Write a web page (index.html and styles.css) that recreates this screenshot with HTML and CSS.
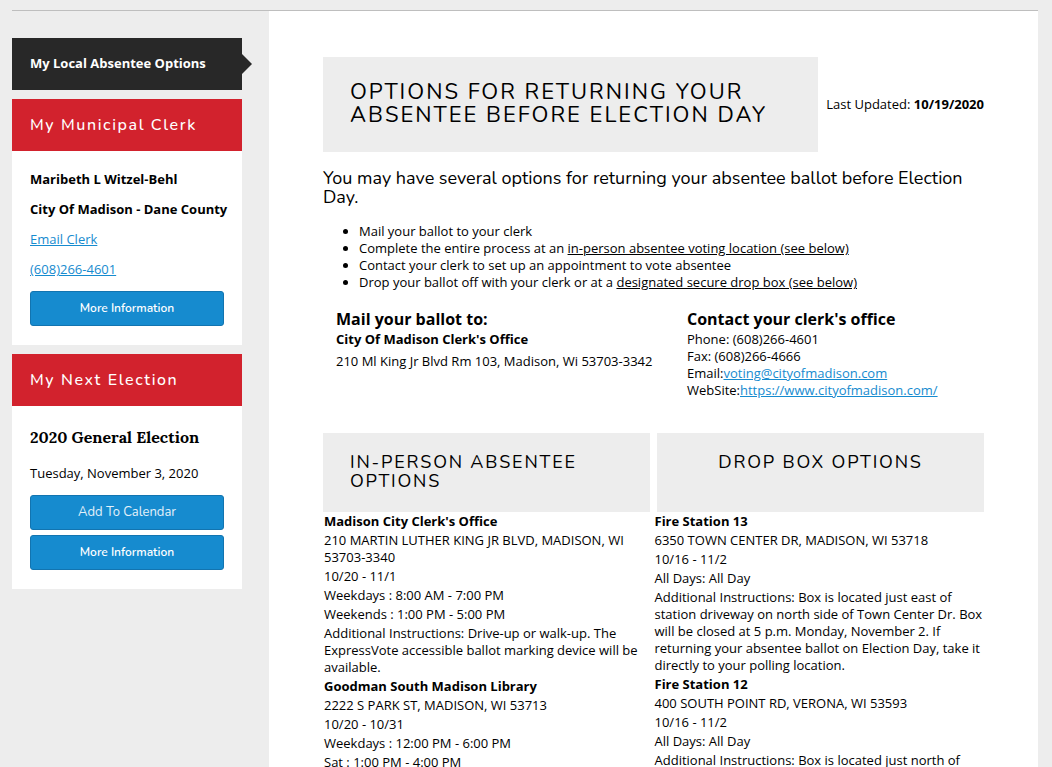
FILE: index.html
```html
<!DOCTYPE html>
<html lang="en">
<head>
<meta charset="utf-8">
<meta name="viewport" content="width=device-width, initial-scale=1">
<title>My Local Absentee Options</title>
<link rel="stylesheet" href="styles.css">
</head>
<body>
<div class="page">
  <aside class="sidebar">
    <nav class="current">My Local Absentee Options</nav>
    <section class="card">
      <h2 class="card-title">My Municipal Clerk</h2>
      <div class="card-body">
        <p><strong>Maribeth L Witzel-Behl</strong></p>
        <p><strong>City Of Madison - Dane County</strong></p>
        <p><a href="#">Email Clerk</a></p>
        <p><a href="#">(608)266-4601</a></p>
        <button class="btn" type="button">More Information</button>
      </div>
    </section>
    <section class="card">
      <h2 class="card-title">My Next Election</h2>
      <div class="card-body">
        <h3 class="election">2020 General Election</h3>
        <p>Tuesday, November 3, 2020</p>
        <button class="btn btn-light" type="button">Add To Calendar</button>
        <button class="btn" type="button">More Information</button>
      </div>
    </section>
  </aside>
  <main class="main">
    <header class="top">
      <h1 class="banner">Options for returning your absentee before election day</h1>
      <p class="updated">Last Updated: <strong>10/19/2020</strong></p>
    </header>
    <h2 class="lead">You may have several options for returning your absentee ballot before Election Day.</h2>
    <ul class="options">
      <li>Mail your ballot to your clerk</li>
      <li>Complete the entire process at an <a href="#in-person">in-person absentee voting location (see below)</a></li>
      <li>Contact your clerk to set up an appointment to vote absentee</li>
      <li>Drop your ballot off with your clerk or at a <a href="#drop-box">designated secure drop box (see below)</a></li>
    </ul>
    <div class="contact">
      <section>
        <h3>Mail your ballot to:</h3>
        <p class="office"><strong>City Of Madison Clerk's Office</strong></p>
        <p>210 Ml King Jr Blvd Rm 103, Madison, Wi 53703-3342</p>
      </section>
      <section>
        <h3>Contact your clerk's office</h3>
        <p>Phone: (608)266-4601</p>
        <p>Fax: (608)266-4666</p>
        <p>Email:<a href="#">voting@cityofmadison.com</a></p>
        <p>WebSite:<a href="#">https://www.cityofmadison.com/</a></p>
      </section>
    </div>
    <div class="heads">
      <h2 class="head" id="in-person">In-person absentee options</h2>
      <h2 class="head head-center" id="drop-box">Drop box options</h2>
    </div>
    <div class="places">
      <section class="places-col">
        <p><strong>Madison City Clerk's Office</strong></p>
        <p>210 MARTIN LUTHER KING JR BLVD, MADISON, WI 53703-3340</p>
        <p>10/20 - 11/1</p>
        <p>Weekdays : 8:00 AM - 7:00 PM</p>
        <p>Weekends : 1:00 PM - 5:00 PM</p>
        <p>Additional Instructions: Drive-up or walk-up. The ExpressVote accessible ballot marking device will be available.</p>
        <p><strong>Goodman South Madison Library</strong></p>
        <p>2222 S PARK ST, MADISON, WI 53713</p>
        <p>10/20 - 10/31</p>
        <p>Weekdays : 12:00 PM - 6:00 PM</p>
        <p>Sat : 1:00 PM - 4:00 PM</p>
      </section>
      <section class="places-col">
        <p><strong>Fire Station 13</strong></p>
        <p>6350 TOWN CENTER DR, MADISON, WI 53718</p>
        <p>10/16 - 11/2</p>
        <p>All Days: All Day</p>
        <p>Additional Instructions: Box is located just east of station driveway on north side of Town Center Dr. Box will be closed at 5 p.m. Monday, November 2. If returning your absentee ballot on Election Day, take it directly to your polling location.</p>
        <p><strong>Fire Station 12</strong></p>
        <p>400 SOUTH POINT RD, VERONA, WI 53593</p>
        <p>10/16 - 11/2</p>
        <p>All Days: All Day</p>
        <p>Additional Instructions: Box is located just north of</p>
      </section>
    </div>
  </main>
</div>
</body>
</html>
```
FILE: styles.css
```css
* { box-sizing: border-box; }

body {
  margin: 0;
  padding: 10px 14px 0 12px;
  background: #ededed;
  color: #000;
  font: 13px/17px "Open Sans", "Noto Sans", sans-serif;
}

h1, h2, h3, p, ul { margin: 0; }
a { color: #168bcf; }

.page {
  display: flex;
  gap: 27px;
  border-top: 1px solid #bebebe;
}

/* Sidebar */
.sidebar {
  flex: 0 0 230px;
  min-width: 0;
  display: flex;
  flex-direction: column;
  gap: 9px;
  padding-top: 27px;
}

.current {
  position: relative;
  padding: 17px 18px 18px;
  background: #282828;
  color: #fff;
  font-weight: 700;
}
.current::after {
  content: "";
  position: absolute;
  left: 100%;
  top: 16px;
  border: 10px solid transparent;
  border-left-color: #282828;
  border-right-width: 0;
}

.card { background: #fff; }
.card-title {
  padding: 16px 18px;
  background: #d2222d;
  color: #fff;
  font: 500 16px/20px Nunito, Lato, sans-serif;
  letter-spacing: 0.1em;
}
.card-body { padding: 20px 18px 19px; }
.card-body p {
  margin-bottom: 13px;
  white-space: nowrap;
}
.election {
  margin-bottom: 16px;
  font: 700 16px/23px Lora, "Liberation Serif", serif;
}

.btn {
  display: block;
  width: 100%;
  height: 35px;
  border: 1px solid #1274b0;
  border-radius: 3px;
  background: #168bcf;
  color: #fff;
  font: 600 12px/17px Nunito, Lato, sans-serif;
}
.btn + .btn { margin-top: 5px; }
.btn-light {
  color: #e3f1fa;
  font-size: 13px;
  font-weight: 400;
}

/* Main column */
.main {
  flex: 1;
  min-width: 0;
  padding: 46px 54px 0;
  background: #fff;
}

.top {
  display: flex;
  align-items: center;
  gap: 8px;
}
.banner {
  flex: 1;
  padding: 24px 27px 25px;
  background: #ededed;
  font: 400 22px/23px Nunito, Lato, sans-serif;
  letter-spacing: 2px;
  text-transform: uppercase;
}
.updated { white-space: nowrap; }

.lead {
  margin-top: 17px;
  font: 400 18px/19px Nunito, Lato, sans-serif;
}

.options {
  margin-top: 16px;
  padding-left: 36px;
}
.options a { color: inherit; }

.contact {
  display: grid;
  grid-template-columns: 351fr 297fr;
  margin-top: 17px;
  padding-left: 13px;
}
.contact h3 {
  font-size: 16px;
  line-height: 23px;
}
.contact .office { margin-bottom: 5px; }

.heads {
  display: grid;
  grid-template-columns: 1fr 1fr;
  gap: 7px;
  margin-top: 34px;
}
.head {
  padding: 20px 27px 21px;
  background: #ededed;
  font: 400 18px/19px Nunito, Lato, sans-serif;
  letter-spacing: 0.1em;
  text-transform: uppercase;
}
.head-center { text-align: center; }

.places {
  display: grid;
  grid-template-columns: 1fr 1fr;
}
.places-col { padding-left: 1px; }
.places-col p { padding: 1px 0; }
```
